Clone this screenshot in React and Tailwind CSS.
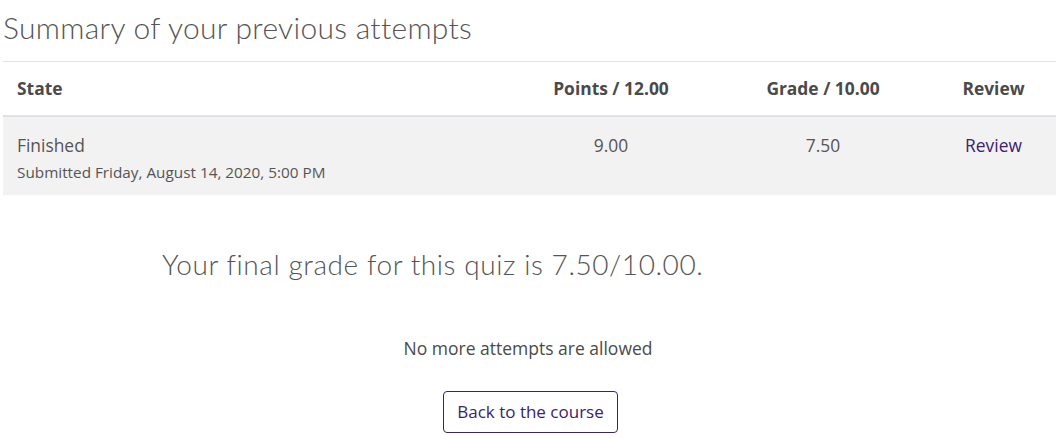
export default function App() {
  const body = { fontFamily: '"Open Sans", "Liberation Sans", sans-serif' };
  const head = { fontFamily: 'Lato, "Open Sans", sans-serif' };
  return (
    <div className="w-[1056px] h-[438px] bg-white overflow-hidden text-[#555]" style={body}>
      <div className="pl-[3px]">
        <h2 className="h-[61px] pt-[8px] text-[30px] leading-[38px] font-light text-[#555] tracking-[0.3px]" style={head}>
          Summary of your previous attempts
        </h2>
        <div className="border-t border-[#e3e3e3]">
          <div className="grid grid-cols-[504px_208px_216px_125px] h-[55px] items-center border-b-2 border-[#dee2e6] text-[17.4px] font-bold text-[#4a4a4a]">
            <div className="pl-[14px]">State</div>
            <div className="text-center">Points / 12.00</div>
            <div className="text-center">Grade / 10.00</div>
            <div className="text-center">Review</div>
          </div>
          <div className="grid grid-cols-[504px_208px_216px_125px] h-[78px] bg-[#f2f2f2] text-[17.4px] pt-[16px]">
            <div className="pl-[14px]">
              <div className="leading-[24px]">Finished</div>
              <div className="text-[15.3px] leading-[24px] mt-[3px]">Submitted Friday, August 14, 2020, 5:00 PM</div>
            </div>
            <div className="text-center leading-[24px]">9.00</div>
            <div className="text-center leading-[24px]">7.50</div>
            <div className="text-center leading-[24px]"><a className="text-[#3a2270]">Review</a></div>
          </div>
        </div>
      </div>
      <div className="pl-[162px] pt-[51px] text-[28px] leading-[36px] font-light text-[#555] tracking-[0.57px]" style={head}>
        Your final grade for this quiz is 7.50/10.00.
      </div>
      <div className="mt-[54px] text-center text-[17.5px] leading-[24px] text-[#4a4a4a]">No more attempts are allowed</div>
      <div className="flex justify-center mt-[31px] pl-[5px]">
        <button className="w-[175px] h-[42px] border border-[#3b2468] rounded-[4px] text-[#3a2270] text-[17px] bg-white">
          Back to the course
        </button>
      </div>
    </div>
  );
}
